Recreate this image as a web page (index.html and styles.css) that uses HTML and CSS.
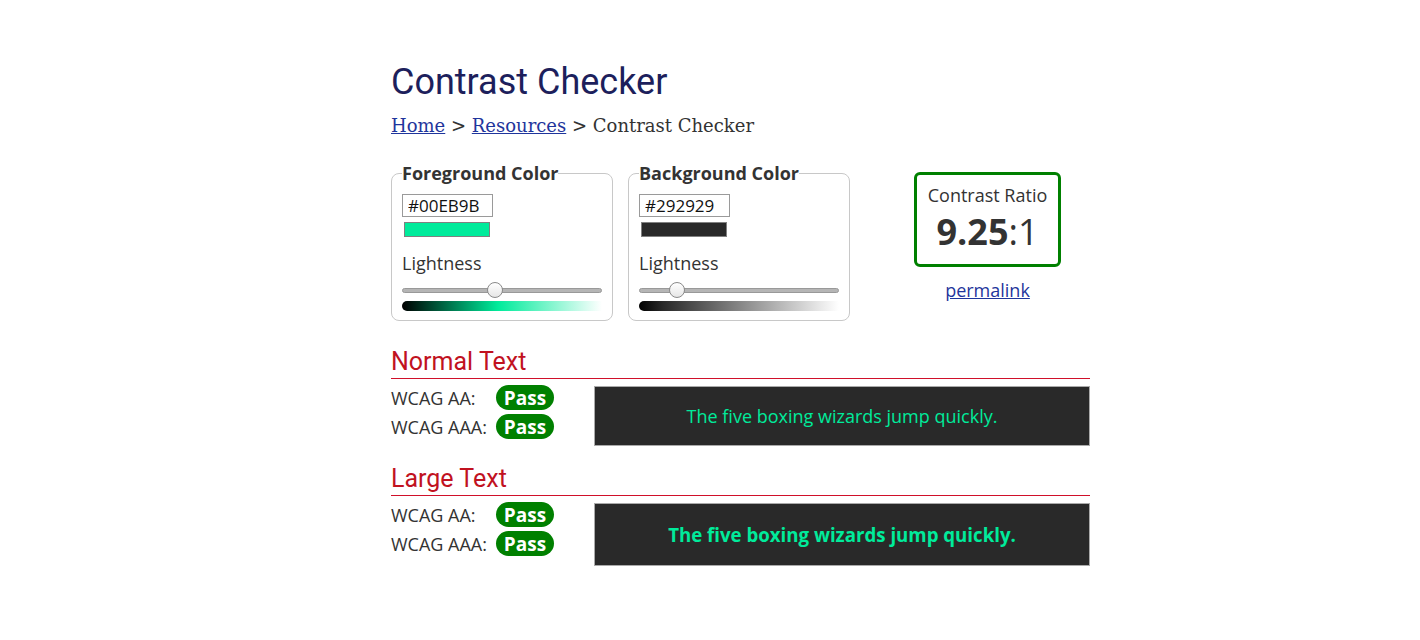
FILE: index.html
```html
<!DOCTYPE html>
<html lang="en">
<head>
<meta charset="utf-8">
<title>Contrast Checker</title>
<link rel="stylesheet" href="styles.css">
</head>
<body>
<main class="page">
  <h1 class="title">Contrast Checker</h1>
  <nav class="crumbs"><a href="#">Home</a> &gt; <a href="#">Resources</a> &gt; Contrast Checker</nav>

  <div class="controls">
    <fieldset class="picker">
      <legend>Foreground Color</legend>
      <input class="hex" type="text" value="#00EB9B">
      <div class="swatch" style="background:#00EB9B"></div>
      <div class="label">Lightness</div>
      <input class="slider" type="range" min="0" max="100" value="46">
      <div class="grad grad-fg"></div>
    </fieldset>
    <fieldset class="picker">
      <legend>Background Color</legend>
      <input class="hex" type="text" value="#292929">
      <div class="swatch" style="background:#292929"></div>
      <div class="label">Lightness</div>
      <input class="slider" type="range" min="0" max="100" value="16">
      <div class="grad grad-bg"></div>
    </fieldset>
    <div class="result">
      <div class="ratio-box">
        <div class="ratio-label">Contrast Ratio</div>
        <div class="ratio"><b>9.25</b>:1</div>
      </div>
      <a class="permalink" href="#">permalink</a>
    </div>
  </div>

  <section class="section">
    <h2 class="sec-title">Normal Text</h2>
    <div class="sec-body">
      <div class="checks">
        <div class="check"><span class="lvl">WCAG AA:</span><span class="pass">Pass</span></div>
        <div class="check"><span class="lvl">WCAG AAA:</span><span class="pass">Pass</span></div>
      </div>
      <div class="sample">The five boxing wizards jump quickly.</div>
    </div>
  </section>

  <section class="section section-large">
    <h2 class="sec-title">Large Text</h2>
    <div class="sec-body">
      <div class="checks">
        <div class="check"><span class="lvl">WCAG AA:</span><span class="pass">Pass</span></div>
        <div class="check"><span class="lvl">WCAG AAA:</span><span class="pass">Pass</span></div>
      </div>
      <div class="sample sample-large">The five boxing wizards jump quickly.</div>
    </div>
  </section>
</main>
</body>
</html>
```

FILE: styles.css
```css
* { box-sizing: border-box; }
html, body { margin: 0; padding: 0; background: #fff; }
body {
  font-family: "Open Sans", "Liberation Sans", sans-serif;
  color: #333;
}
.page {
  width: 699px;
  margin-left: 391px;
  padding-top: 60px;
}
.title {
  margin: 0;
  font-family: Roboto, "Liberation Sans", sans-serif;
  font-weight: 400;
  font-size: 36px;
  line-height: 44px;
  color: #1d1f5c;
}
.crumbs {
  margin-top: 11px;
  font-family: "DejaVu Serif", "Liberation Serif", serif;
  font-size: 18px;
  line-height: 21px;
  color: #333;
}
.crumbs a { color: #1f359c; }

.controls {
  display: flex;
  align-items: flex-start;
  margin-top: 25px;
}
.picker {
  width: 222px;
  margin: 0;
  padding: 9px 10px 9px 10px;
  border: 1px solid #c8c8c8;
  border-radius: 8px;
}
.picker + .picker { margin-left: 15px; }
.picker legend {
  padding: 0;
  font-weight: 700;
  font-size: 18px;
  line-height: 24px;
  color: #333;
}
.hex {
  display: block;
  width: 91px;
  height: 23px;
  margin: 0;
  padding: 0 5px;
  border: 1px solid #9a9a9a;
  border-radius: 0;
  font-family: "Open Sans", sans-serif;
  font-size: 17px;
  color: #111;
  background: #fff;
}
.swatch {
  width: 86px;
  height: 15px;
  margin: 5px 0 0 2px;
  border: 1px solid #808080;
}
.label {
  margin-top: 14px;
  font-size: 18px;
  line-height: 24px;
  color: #333;
}
.slider {
  -webkit-appearance: none;
  appearance: none;
  display: block;
  width: 200px;
  height: 16px;
  margin: 7px 0 0 0;
  padding: 0;
  background: transparent;
}
.slider::-webkit-slider-runnable-track {
  height: 5px;
  border: 1px solid #999;
  border-radius: 3px;
  background: #b5b5b5;
}
.slider::-webkit-slider-thumb {
  -webkit-appearance: none;
  width: 16px;
  height: 16px;
  margin-top: -6.5px;
  border: 1px solid #8a8a8a;
  border-radius: 50%;
  background: linear-gradient(#fff, #e6e6e6);
}
.grad {
  width: 200px;
  height: 10px;
  margin-top: 3px;
  border-radius: 5px 0 0 5px;
}
.grad-fg { background: linear-gradient(to right, #000 0%, #00eb9b 48%, #fff 100%); }
.grad-bg { background: linear-gradient(to right, #000 0%, #292929 12%, #fff 100%); }

.result {
  margin-left: 64px;
  width: 147px;
  margin-top: 11px;
  display: flex;
  flex-direction: column;
  align-items: center;
}
.ratio-box {
  width: 147px;
  padding: 8px 0 8px;
  border: 3px solid #008000;
  border-radius: 6px;
  text-align: center;
}
.ratio-label { font-size: 18px; line-height: 24px; }
.ratio { font-size: 36px; line-height: 48px; margin-top: 1px; }
.ratio b { font-weight: 700; }
.permalink {
  margin-top: 11px;
  font-size: 18px;
  line-height: 24px;
  color: #1f359c;
}

.section { margin-top: 26px; }
.section-large { margin-top: 18px; }
.sec-title {
  margin: 0;
  padding-bottom: 2px;
  border-bottom: 1px solid #d0102a;
  font-family: Roboto, "Liberation Sans", sans-serif;
  font-weight: 400;
  font-size: 25px;
  line-height: 29px;
  color: #c1121f;
}
.sec-body {
  display: grid;
  grid-template-columns: 203px 1fr;
  margin-top: 6px;
}
.checks { display: flex; flex-direction: column; gap: 4px; }
.check { display: flex; align-items: center; height: 25px; }
.lvl { width: 105px; font-size: 18px; color: #333; }
.pass {
  display: inline-flex;
  align-items: center;
  justify-content: center;
  width: 58px;
  height: 25px;
  border-radius: 13px;
  background: #008000;
  color: #fff;
  font-weight: 700;
  font-size: 19px;
}
.sample {
  margin-top: 1px;
  padding: 0.95em 10px;
  border: 1px solid #aaa;
  background: #292929;
  color: #00eb9b;
  text-align: center;
  font-size: 18px;
}
.sample-large {
  font-size: 18.67px;
  font-weight: 700;
}
```
